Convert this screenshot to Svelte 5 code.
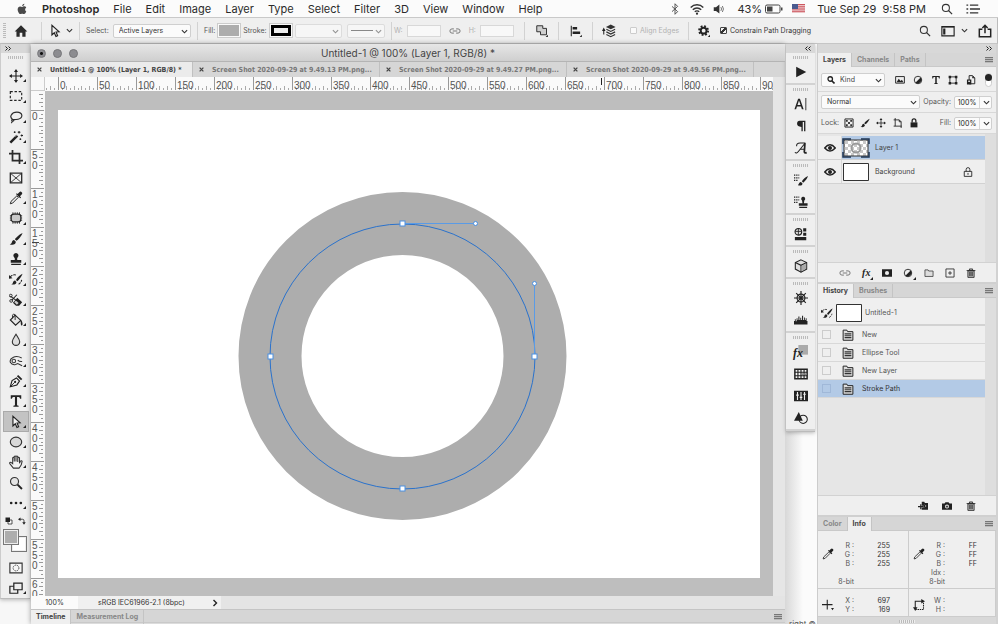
<script>
  const menus = ['File', 'Edit', 'Image', 'Layer', 'Type', 'Select', 'Filter', '3D', 'View', 'Window', 'Help'];
  const tools = [
    ['move', 'Move'], ['marquee', 'Marquee'], ['lasso', 'Lasso'], ['wand', 'Magic wand'], ['crop', 'Crop'],
    ['frame', 'Frame'], ['dropper', 'Eyedropper'], ['patch', 'Patch'], ['brush', 'Brush'], ['stamp', 'Clone stamp'],
    ['historybrush', 'History brush'], ['eraser', 'Eraser'], ['bucket', 'Paint bucket'], ['drop', 'Blur'],
    ['dodge', 'Dodge'], ['pen', 'Pen'], ['type', 'Type'], ['arrow', 'Path selection'], ['ellipse', 'Ellipse'],
    ['hand', 'Hand'], ['zoom', 'Zoom'], ['dots', 'More tools']
  ];
  const noFlyout = ['frame', 'zoom'];
  const docks = [
    ['play'], ['character', 'paragraph', 'glyphs'], ['brushlist', 'stamplist'], ['library'], ['cube'],
    ['wheel', 'histogram'], ['styles', 'swatches', 'adjust', 'shapes']
  ];
  const tabs = [
    'Screen Shot 2020-09-29 at 9.49.13 PM.png...',
    'Screen Shot 2020-09-29 at 9.49.27 PM.png...',
    'Screen Shot 2020-09-29 at 9.49.56 PM.png...'
  ];
  const history = ['New', 'Ellipse Tool', 'New Layer', 'Stroke Path'];
  let activeTool = $state('arrow');
  let activeStep = $state(3);

  const step = 39;
  const majorsX = Array.from({ length: 19 }, (_, i) => ({ i, label: i < 18 ? String(i * 50) : '90' }));
  const majorsY = Array.from({ length: 13 }, (_, i) => ({ i, digits: i < 12 ? String(i * 50).split('') : ['6', '0'] }));
  const minorX = Array.from({ length: 188 }, (_, i) => i - 3).filter((i) => i % 10 !== 0);
  const minorY = Array.from({ length: 130 }, (_, i) => i - 4).filter((i) => i % 10 !== 0);

  const S = 'fill="none" stroke="#2b2b2b"';
  const icons = {
    apple: '<path fill="#4a4a4a" d="M11.2 1c.1 1.600-1.300 3.100-2.900 3.100C8.100 2.500 9.600 1.100 11.200 1zM13.700 11.300c-.6 1.400-1.600 3.500-2.900 3.500-1 0-1.300-.6-2.500-.6s-1.600.6-2.500.6C4.300 14.800 2.200 11.500 2.200 8.700c0-2.700 1.700-4.100 3.300-4.100 1.100 0 2 .7 2.700.7s1.700-.8 3-.8c.9 0 1.900.5 2.500 1.400-2.200 1.300-1.900 4.300 0 5.400z"/>',
    bluetooth: '<path fill="none" stroke="#444" stroke-width="1.200" d="M4 4.500l7.500 7L8 15V1l3.500 3.500-7.500 7"/>',
    wifi: '<g fill="none" stroke="#333" stroke-width="1.700"><path d="M.8 6.200a10.200 10.200 0 0 1 14.400 0M3.200 8.800a6.800 6.800 0 0 1 9.600 0M5.500 11.200a3.500 3.500 0 0 1 5 0"/></g><circle cx="8" cy="13.300" r="1.300" fill="#333"/>',
    volume: '<path fill="#333" d="M1 5.500h3L8.500 2v12L4 10.500H1z"/><path fill="none" stroke="#666" stroke-width="1.200" d="M10.500 5.500q1.800 2.500 0 5M12.500 4q2.800 4 0 8"/>',
    search: '<circle cx="6.500" cy="6.500" r="4.700" fill="none" stroke="#333" stroke-width="1.400"/><path stroke="#333" stroke-width="1.600" d="M10 10l4.800 4.800"/>',
    searchbold: '<circle cx="6.500" cy="6" r="4.500" fill="none" stroke="#222" stroke-width="2.600"/><path stroke="#222" stroke-width="3.200" d="M9.500 9.500l5.500 5.500"/>',
    list: '<path stroke="#333" stroke-width="1.500" d="M4.500 3.500H14M4.500 8H16M4.500 12.500H14M.5 3.500H2.500M.5 8H2.500M.5 12.500H2.500"/>',
    home: '<path fill="#2b2b2b" d="M8 1.500L.8 8.500h2V14.500h3.700V10h3v4.500h3.700V8.500h2z"/>',
    arrow: '<path fill="#f4f4f4" stroke="#222" stroke-width="1.300" d="M4.500 1.500v11l2.700-2.500 1.900 4.300 1.900-.9L9.200 9.200l3.500-.3z"/>',
    link: '<g fill="none" stroke="#777" stroke-width="1.300"><path d="M6.500 10.800H4a2.800 2.800 0 0 1 0-5.600h2.500M9.500 5.200H12a2.800 2.800 0 0 1 0 5.600H9.500M5 8h6"/></g>',
    combine: '<path fill="#cfcfcf" stroke="#222" stroke-width="1.200" d="M1 1h8v3.500h5V13H6V9H1z"/><path fill="#222" d="M15.800 13v3H12.800z"/>',
    align: '<path fill="#222" d="M1 1h1.400v14H1zM3.500 2.500h6V6h-6zM3.500 8.500h10V12h-10zM15.800 13v3h-3z"/>',
    stack: '<path fill="#333" d="M10 .5l5.500 2.800L10 6 4.500 3.300z"/><path fill="none" stroke="#333" stroke-width="1.300" d="M5 6l5 2.500L15 6M5 9l5 2.500L15 9M5 12l5 2.500 5-2.500M2 12V6"/><path fill="#222" d="M2 4l2 4H0z"/>',
    gear: '<path fill="none" stroke="#222" stroke-width="2.600" stroke-dasharray="2.400 2.270" d="M13.450 7.500A5.950 5.950 0 1 1 1.550 7.500A5.950 5.950 0 1 1 13.450 7.500"/><circle cx="7.500" cy="7.500" r="3.900" fill="none" stroke="#222" stroke-width="2.600"/><path fill="#222" d="M16 13v3h-3z"/>',
    workspace: '<path fill="none" stroke="#222" stroke-width="1.300" d="M1 3h14v10.500H1z"/><path fill="#222" d="M2.500 5H5v7H2.500zM1 2.500h14v1.500H1z"/>',
    share: '<path fill="none" stroke="#222" stroke-width="1.700" d="M5 6H1.500v8.500h13V6H11M8 10.500V2M5 4.500L8 1.500l3 3"/>',
    move: '<path stroke="#222" stroke-width="1.300" d="M8 2v12M2 8h12"/><path fill="#222" d="M8 0l2.300 3.300H5.700zM8 16l2.300-3.300H5.700zM0 8l3.300-2.300v4.600zM16 8l-3.300-2.300v4.600z"/>',
    marquee: '<path fill="none" stroke="#222" stroke-width="1.300" stroke-dasharray="2.800 2" d="M1.500 3h13v10h-13z"/>',
    lasso: `<path ${S} stroke-width="1.300" d="M4.500 11C-.5 8 3 2.500 9 2.500c7 0 7.500 6.500 1.500 8-2.500.6-6 .5-6 .5zM4 10.500c-2 1-.5 2.500 1 2 1-.5.500-2-.5-1.500M3.500 12.500q.5 1.500-1 2.500"/>`,
    wand: '<path stroke="#222" stroke-width="2.800" d="M1.500 14.500l8-8"/><path stroke="#eee" stroke-width=".8" d="M7.500 7.500l1.500-1.500"/><path stroke="#222" stroke-width="1.200" d="M11.500 1v3M10 2.500h3M14.500 5v2.500M13.300 6.200H16M6.500 1.500v2M5.500 2.500h2M13 9.500v2M12 10.500h2"/>',
    crop: `<path ${S} stroke-width="2" d="M4 0v12h12M0 4h12v12"/>`,
    frame: `<path ${S} stroke-width="1.500" d="M1.500 2.500h13v11h-13z"/><path ${S} d="M1.500 2.500l13 11M14.500 2.500l-13 11"/>`,
    dropper: '<path fill="#eee" stroke="#222" stroke-width="1.100" d="M9 5.500l1.700 1.700-6.500 6.600-2.700.8.800-2.700z"/><path fill="#222" d="M8 3.500l4.800 4.800 1-1-1.300-1.300 2-2A1.900 1.900 0 0 0 11.800 1.300l-2 2L9 2.500z"/>',
    patch: '<path stroke="#222" stroke-width="1" d="M4.500 1.500v13M7 1.500v13M9.500 1.500v13M12 1.500v13M1 5.500h14M1 8h14M1 10.500h14"/><rect x="2.500" y="3.500" width="11" height="9" rx="3" fill="#c9c9c9" stroke="#222" stroke-width="1.300"/>',
    brush: '<path fill="#222" d="M15.500 1C13 2 8 6 6.700 8.300l1.800 1.800C11 8.500 14.500 4 15.500 1zM5.800 9.200c-2 0-2.200 1.800-2.700 3.100-.4 1-1.200 1.500-2.300 1.700 3 1.300 7.200.6 7-2.800z"/>',
    stamp: '<path fill="#222" d="M8 1a3 3 0 0 0-2 5.200c.8 1 .8 2 .5 3H2v3h12V9H9.500c-.3-1-.3-2 .5-3A3 3 0 0 0 8 1zM2.500 13.300h11v1.500h-11z"/>',
    historybrush: '<path fill="#222" d="M15.500 2C13 3 9.500 6.500 8 9l1.500 1.500C12 8.500 14.500 5 15.500 2zM7 9.800c-2 .2-2.200 1.600-2.600 2.700-.4.900-1.100 1.300-2.200 1.500 3 1 6.400.3 6.300-2.700z"/><path fill="none" stroke="#222" stroke-width="1.200" d="M1.500 5.500Q4 2.500 8 3.500M11 14q3-2 3.500-5" stroke-dasharray="3 1"/><path fill="#222" d="M0 3.500l4 3.500-4 .8z"/>',
    eraser: '<path fill="#222" d="M9.500 5.500l5.500 5-3.500 4.200L8 14.500 4.500 11z"/><path fill="#ccc" d="M8 8.500l3 3-2 2-3-3z"/><path fill="none" stroke="#222" stroke-width="1.200" d="M1.500 3.500L9 9M9 2L3 8.500"/><circle cx="2" cy="3" r="1.600" fill="none" stroke="#222"/><circle cx="2.500" cy="9" r="1.600" fill="none" stroke="#222"/>',
    bucket: '<path fill="#e6e6e6" stroke="#222" stroke-width="1.300" d="M7 2.500l6.500 6-6 5.500L1.500 8z"/><path fill="none" stroke="#222" d="M7 8V2q-2-2-3 .5V6"/><path fill="#222" d="M12.500 7l2.300 2.500q1.500 4-.3 5-1.500-.5-1-4.500z"/>',
    drop: '<path fill="#ddd" stroke="#333" stroke-width="1.300" d="M8 1.500c2 3.500 4.200 5.500 4.200 8.500a4.200 4.200 0 0 1-8.400 0C3.800 7 6 5 8 1.500z"/>',
    dodge: '<path fill="none" stroke="#333" stroke-width="1.200" d="M14.500 4.500Q9 1.500 4.500 4 .5 6 1.500 9.500q2 3.500 6 2.500l2.500-1 5 2.500M15 8.500q-3 .5-5-1.500"/><circle cx="5.500" cy="8" r="2" fill="none" stroke="#333" stroke-width="1.200"/>',
    pen: '<path fill="#eee" stroke="#222" stroke-width="1.300" d="M1.500 14.500L3.500 7.500l5-3L12 8l-3 4.500z"/><path fill="#222" d="M9 2.500l4.700 4.700 1.500-1.500L10.500 1z"/><path stroke="#222" d="M2 14l4.500-4.500"/><circle cx="7" cy="9" r="1.200" fill="#222"/>',
    type: '<path fill="#222" d="M2 1.500h12V5.500h-1.300Q12.500 3.300 11 3.300H9.200v9.200q0 .9 1.800.9v1.100H5v-1.100q1.800 0 1.800-.9V3.300H5Q3.500 3.300 3.300 5.500H2z"/>',
    ellipse: '<ellipse cx="8" cy="8" rx="6.500" ry="5.500" fill="#d8d8d8" stroke="#333" stroke-width="1.300"/>',
    hand: '<path fill="#f2f2f2" stroke="#333" stroke-width="1.200" d="M5 15L.8 9.800Q.6 8 2.300 8.500L4.200 10V3.300q.9-1.200 1.800 0V7.500 1.800q1-1.300 2 0V7.500 1.800q1-1.300 2 0V8 3.300q1-1.200 2 0V9.500l1-2.500q1.500-1.200 2 .3Q14.500 12 11.500 15z"/>',
    zoom: '<circle cx="6.300" cy="6.300" r="4.600" fill="#e4e4e4" stroke="#333" stroke-width="1.300"/><path stroke="#222" stroke-width="2.200" d="M9.800 9.800l5 5"/>',
    dots: '<g fill="#222"><circle cx="2.500" cy="8" r="1.500"/><circle cx="8" cy="8" r="1.500"/><circle cx="13.500" cy="8" r="1.500"/></g>',
    mask: '<path fill="#f6f6f6" stroke="#333" stroke-width="1.300" d="M1 2.500h14v11H1z"/><circle cx="8" cy="8" r="3.300" fill="none" stroke="#333" stroke-dasharray="1.500 .8"/>',
    screen: '<path fill="#eee" stroke="#222" stroke-width="1.400" d="M1 6h9v8H1z"/><path fill="#eee" stroke="#222" stroke-width="1.400" d="M5.500 2.500H15V10H5.500z"/>',
    reset: '<path fill="#f8f8f8" stroke="#222" stroke-width="1.500" d="M6 6h8v8H6z"/><path fill="#222" d="M1 1h9v9H1z"/>',
    swap: '<path fill="none" stroke="#222" stroke-width="1.600" d="M4 4.500h5q3 0 3 3V12"/><path fill="#222" d="M5 1v7L0 4.500zM8.500 10.500h7L12 15.500z"/>',
    play: '<path fill="#222" d="M2.500 2L14 8 2.500 14z"/>',
    character: '<path fill="#222" fill-rule="evenodd" d="M4.700 2h2.100l4.200 12H9L8 10.800H3.400L2.400 14H.5zM5.700 4L4 9.200h3.500z"/><path stroke="#444" stroke-width="1.200" d="M13.500 1v14"/>',
    paragraph: '<path fill="#222" d="M6.500 2H13v12h-1.500V3.500H10V14H8.500V9Q3.500 9 3.500 5.500T6.500 2z"/>',
    glyphs: '<path fill="none" stroke="#222" stroke-width="1.200" d="M3 6Q2.500 2.200 7 2.200H13M13 2L5 12Q3 14.800 1 13M6.500 9.500H12"/><path fill="none" stroke="#222" stroke-width="2" d="M12.500 2.500L11.800 12.500q.5 1.500 2.700.8"/>',
    brushlist: '<path fill="none" stroke="#222" stroke-width="1.500" stroke-dasharray="1.500 1" d="M0 2.500h6M0 5.500h6M0 8.500h5"/><path fill="#222" d="M16 3.500c-3 1-5.500 3.500-7 6l1.500 1.500c2.500-1.500 4.500-4.500 5.500-7.500zM8 10.300c-2 0-2 1.500-3.500 3.700 3.500 1 5.200 0 5.200-2z"/>',
    stamplist: '<path fill="none" stroke="#222" stroke-width="1.500" stroke-dasharray="1.500 1" d="M0 2.500h6M0 5.500h6M0 8.500h5"/><path fill="#222" d="M10.500 2a2.300 2.300 0 0 0-1.300 4.200l.5 3.300H5.500v2.800h10V9.500h-4.200l.5-3.300A2.300 2.300 0 0 0 10.500 2zM6 13.500h9v1.300H6z"/>',
    library: '<circle cx="5" cy="5.500" r="3.800" fill="#ddd" stroke="#222" stroke-width="1.300"/><path stroke="#222" d="M1.500 5h7M5 2v7"/><path fill="#222" d="M10.500 1.500H14V5h-3.500zM10.500 6.500H14V10h-3.500zM1 11.500h13v3.500H1z"/>',
    cube: '<path fill="#ddd" stroke="#222" stroke-width="1.200" d="M8 1l6.500 3v7.500L8 15l-6.500-3.500V4z"/><path fill="none" stroke="#222" stroke-width="1.200" d="M1.500 4L8 7.200 14.500 4M8 7.200V15"/><path fill="#aaa" d="M8.700 7.600l5.200-2.500v6L8.700 14z"/>',
    wheel: '<g fill="none" stroke="#222" stroke-width="1.300"><circle cx="8" cy="8" r="4.500"/><path d="M8 0v16M0 8h16M2.500 2.500l11 11M13.500 2.500l-11 11"/></g><circle cx="8" cy="8" r="1.800" fill="#222"/>',
    histogram: '<path fill="#222" d="M0 13V9h1V7h1v2.500h1V6h1v2h1V4h1.200v4h1V5.500h1V8h1V3h1.200v5h1V5h1v3h1V6h1v3h1v4z"/>',
    styles: '<path fill="#aaa" d="M5 0h11v11H5z"/>',
    swatches: '<path fill="#f4f4f4" stroke="#222" stroke-width="1.700" d="M1 2.500h14v11H1z"/><path fill="none" stroke="#222" stroke-width="1.300" d="M4.500 2.500v11M8 2.500v11M11.500 2.500v11M1 6h14M1 10h14"/><path fill="#888" d="M9 7h2v2H9zM12 7h2v2h-2z"/>',
    adjust: '<path fill="#222" d="M0 2h16v12H0z"/><path fill="none" stroke="#eee" stroke-width="1.300" d="M4 3.500v9M8 3.500v9M12 3.500v9M2.500 7h3M6.500 9.500h3M10.500 6h3"/>',
    shapes: '<circle cx="10.500" cy="9.500" r="4.700" fill="none" stroke="#222" stroke-width="1.200"/><path fill="#222" d="M5.500 1L10 11H0z"/>',
    image: '<path fill="none" stroke="#222" stroke-width="1.500" d="M1 2.500h14v10.500H1z"/><path fill="#222" d="M2.500 11.500L6 6l3 3.500 2-2 2.500 4z"/>',
    halfcircle: '<circle cx="8" cy="8" r="6" fill="none" stroke="#222" stroke-width="1.400"/><path fill="#222" d="M12.200 3.800a6 6 0 0 1-8.400 8.400z"/>',
    shape: '<path fill="none" stroke="#222" stroke-width="1.400" d="M3 3h10v10H3z"/><path fill="#222" d="M1 1h4v4H1zM11 1h4v4h-4zM1 11h4v4H1zM11 11h4v4h-4z"/>',
    smart: '<path fill="#eee" stroke="#222" stroke-width="1.500" d="M5 1h5.500L14 4.500V14H5z"/><path fill="#222" d="M1.500 7h7v8h-7zM10 1v4h4z"/><path fill="#eee" d="M3.500 9h3v2h-3z"/>',
    checker: '<path fill="#eee" stroke="#222" stroke-width="1.500" d="M1.500 1.500h13v13h-13z"/><path fill="#333" d="M3 3h3v3H3zM10 3h3v3h-3zM6.500 6.500h3v3h-3zM3 10h3v3H3zM10 10h3v3h-3z"/>',
    artboard: '<path fill="none" stroke="#222" stroke-width="1.400" d="M3.500 0v13M1 3h9l3 3v10M1 13h13M10 3v3h3"/>',
    lock: '<path fill="#222" d="M2.500 7h11v8h-11z"/><path fill="none" stroke="#222" stroke-width="2" d="M5 7V4.500a3 3 0 0 1 6 0V7"/>',
    lockline: '<path fill="#eee" stroke="#222" stroke-width="1.400" d="M2 7h12v8H2z"/><path fill="none" stroke="#222" stroke-width="1.400" d="M5 7V4a3 3 0 0 1 6 0v3M8 9.500v3"/>',
    eye: '<path fill="none" stroke="#222" stroke-width="2" d="M1 8q7-8.500 14 0-7 8-14 0z"/><circle cx="8" cy="8" r="2.700" fill="#222"/>',
    maskbtn: '<path fill="#222" d="M0 2h16v12H0z"/><circle cx="8" cy="8" r="3.300" fill="#eee"/>',
    folder: '<path fill="#ddd" stroke="#333" stroke-width="1.200" d="M1.500 3h5l1 1.800h7V13.500h-13z"/>',
    plus: '<path fill="none" stroke="#222" stroke-width="1.300" d="M1.500 1.500h13v13h-13zM8 5v6M5 8h6"/>',
    trash: '<path fill="#bbb" stroke="#222" stroke-width="1.300" d="M3 4.500h10V15H3zM1 4h14M5.500 3.500V1.500h5v2M6 6v7M8 6v7M10 6v7"/>',
    doc: '<path fill="#ddd" stroke="#222" stroke-width="1.300" d="M1.500 4V1.500h5L7.500 3.500h7V15h-13z"/><path stroke="#333" stroke-width="1.400" d="M3.500 6.500h9M3.500 9h9M3.500 11.500h9"/>',
    camera: '<path fill="#222" fill-rule="evenodd" d="M0 4h4l1.500-2h5L12 4h4v10H0zM8 5.500a3.300 3.300 0 1 0 0 6.600 3.300 3.300 0 0 0 0-6.600z"/><path stroke="#222" stroke-width="1.300" d="M8 7v4M6 9h4"/>',
    newdoc: '<path fill="#222" d="M6 1h4l1 2h5v11H6v-3.500h3V7.500H6z"/><path stroke="#222" stroke-width="2" d="M0 9h9M4.500 5v8"/><path stroke="#eee" d="M11 6l2 2-2 2"/>',
    cross: '<path stroke="#222" stroke-width="1.400" d="M7 1v13M0 7.500h14"/><path fill="#222" d="M12 12h4l-2 3z"/>',
    bounds: '<path fill="none" stroke="#222" stroke-width="1.400" d="M3 12V3h9"/><path fill="none" stroke="#222" stroke-width="1.400" stroke-dasharray="2 1" d="M14 5v9H4"/><path fill="#222" d="M11 0l5 3-5 3zM0 11h6l-3 5z"/>'
  };
</script>

{#snippet icon(name, cls = '')}
  <svg class="ic {cls}" viewBox="0 0 16 16" aria-hidden="true">{@html icons[name]}</svg>
{/snippet}

{#snippet chev()}
  <svg class="chev" viewBox="0 0 8 8" aria-hidden="true"><path fill="none" stroke="#333" stroke-width="1.300" d="M1 2.500l3 3 3-3" /></svg>
{/snippet}

{#snippet closer()}
  <svg class="closer" viewBox="0 0 8 8" aria-hidden="true"><path stroke="#444" stroke-width="2" d="M1 1l6 6M7 1l-6 6" /></svg>
{/snippet}

{#snippet arrows(dir)}
  <svg class="arrows" viewBox="0 0 12 10" aria-hidden="true"><path fill="none" stroke="#222" stroke-width="2" d={dir === 'r' ? 'M1 1l4 4-4 4M7 1l4 4-4 4' : 'M5 1L1 5l4 4M11 1L7 5l4 4'} /></svg>
{/snippet}

{#snippet panelMenu()}
  <button class="pmenu" aria-label="Panel menu"><i></i></button>
{/snippet}

<div class="app">
  <nav class="menubar">
    {@render icon('apple', 'm')}
    <button class="brand">Photoshop</button>
    {#each menus as m}<button>{m}</button>{/each}
    <div class="status">
      {@render icon('bluetooth', 'm')}
      {@render icon('wifi', 'l')}
      {@render icon('volume', 'm')}
      <span class="batt">43%
        <svg width="18" height="10" viewBox="0 0 18 10" aria-hidden="true"><rect x=".5" y="1" width="14.500" height="8" rx="1.500" fill="none" stroke="#444" /><path fill="#444" d="M2 2.500h5.500v5H2zM16 3.500h1.500v3H16z" /></svg>
      </span>
      <svg class="flag" width="13" height="9" viewBox="0 0 13 9" aria-hidden="true"><path fill="#f2dfe0" d="M0 0h13v9H0z" /><path stroke="#c8464f" stroke-width=".9" d="M0 .5h13M0 2.300h13M0 4.100h13M0 5.900h13M0 7.700h13" /><path fill="#4a5a8f" d="M0 0h6v5H0z" /></svg>
      <span class="clock">Tue Sep 29&nbsp; 9:58 PM</span>
      <span class="find">{@render icon('search', 'm')}</span>
      {@render icon('list', 'l')}
    </div>
  </nav>

  <div class="options">
    <div class="og first"><i class="vgrip"></i><button aria-label="Home">{@render icon('home', 'l')}</button></div>
    <div class="og w38"><button aria-label="Path selection tool">{@render icon('arrow', 'l')}</button>{@render chev()}</div>
    <div class="og w118">
      <label for="sel">Select:</label>
      <span class="sel grow"><select id="sel"><option>Active Layers</option></select>{@render chev()}</span>
    </div>
    <div class="og w194">
      <span>Fill:</span><button class="sw" aria-label="Fill"><i class="grey"></i></button>
      <span>Stroke:</span><button class="sw" aria-label="Stroke"><i class="ring"></i></button>
      <span class="sel dim w48"><select aria-label="Stroke width"><option></option></select>{@render chev()}</span>
      <span class="sel dim w38s"><select aria-label="Stroke style"><option></option></select><i class="ln"></i>{@render chev()}</span>
    </div>
    <div class="og w133 pale">
      <label for="w">W:</label><input id="w" type="text" />
      {@render icon('link', 'm')}
      <label for="h">H:</label><input id="h" type="text" />
    </div>
    <div class="og w34"><button aria-label="Path operations">{@render icon('combine', 'm')}</button></div>
    <div class="og w34"><button aria-label="Path alignment">{@render icon('align', 'm')}</button></div>
    <div class="og w96">
      <button aria-label="Path arrangement">{@render icon('stack', 'l')}</button>
      <label class="pale"><input type="checkbox" disabled />Align Edges</label>
    </div>
    <div class="og last">
      <button aria-label="Path options">{@render icon('gear', 'm')}</button>
      <label class="dark"><input type="checkbox" checked />Constrain Path Dragging</label>
    </div>
    <div class="right">
      <button aria-label="Search">{@render icon('search', 'm')}</button>
      <button aria-label="Workspace">{@render icon('workspace', 'l')}{@render chev()}</button>
      <button aria-label="Share">{@render icon('share', 'l')}</button>
    </div>
  </div>

  <div class="work">
    <aside class="toolbar">
      <div class="strip">{@render arrows('r')}</div>
      <i class="hgrip"></i>
      <div class="tools">
        {#each tools as [id, label]}
          <button class="tool" class:on={activeTool === id} aria-label={label} onclick={() => (activeTool = id)}>
            {@render icon(id, 't')}
            {#if !noFlyout.includes(id)}<i class="corner"></i>{/if}
          </button>
        {/each}
      </div>
      <div class="mini"><button aria-label="Default colours">{@render icon('reset', 's')}</button><button aria-label="Swap colours">{@render icon('swap', 's')}</button></div>
      <div class="colors"><button class="bg" aria-label="Background colour"></button><button class="fg" aria-label="Foreground colour"></button></div>
      <button class="tool plain" aria-label="Quick mask">{@render icon('mask', 't')}</button>
      <button class="tool plain" aria-label="Screen mode">{@render icon('screen', 't')}<i class="corner"></i></button>
    </aside>

    <main class="doc">
      <header class="title">
        <div class="lights"><i class="dot"></i><i></i><i></i></div>
        Untitled-1 @ 100% (Layer 1, RGB/8) *
      </header>
      <div class="tabs">
        <button class="tab cur">{@render closer()}<span>Untitled-1 @ 100% (Layer 1, RGB/8) *</span></button>
        {#each tabs as t}<button class="tab">{@render closer()}<span>{t}</span></button>{/each}
      </div>
      <div class="editor">
        <div class="origin"></div>
        <svg class="hr" aria-hidden="true">
          {#each minorX as i}<path stroke="#aaa" d="M{13.5 + Math.round(i * 3.9)} {i % 2 ? 11 : 9}V13" />{/each}
          {#each majorsX as { i, label }}
            <path stroke="#999" d="M{13.5 + i * step} 0V13" />
            <text x={15 + i * step} y="12">{label}</text>
          {/each}
          <path stroke="#222" d="M556.500 1V8" />
        </svg>
        <svg class="vr" aria-hidden="true">
          {#each minorY as i}<path stroke="#999" d="M{i % 2 ? 10 : 8} {19.5 + Math.round(i * 3.9)}H12" />{/each}
          {#each majorsY as { i, digits }}
            <path stroke="#999" d="M0 {19.5 + i * step}H13" />
            {#each digits as d, k}<text x="1" y={29 + i * step + k * 10}>{d}</text>{/each}
          {/each}
          <path stroke="#444" d="M1 151.500H8" />
        </svg>
        <svg class="canvas" role="img" aria-label="Grey ring with its path selected">
          <rect x="13" y="19" width="702" height="468" fill="#fff" />
          <circle cx="357.500" cy="265" r="132.500" fill="none" stroke="#adadad" stroke-width="63" />
          <g fill="none" stroke="#2a72cc">
            <circle cx="357.500" cy="265.500" r="132.500" />
            <path stroke="#5a9be6" d="M357 132.500H430M489.500 193V265" />
          </g>
          <g fill="#fff" stroke="#4a90e2" stroke-width="1">
            {#each [[357, 132], [489, 265], [357, 397], [225, 265]] as [x, y]}
              <rect x={x - 2} y={y - 2} width="5" height="5" />
            {/each}
            <circle cx="430.500" cy="132.500" r="2" /><circle cx="489.500" cy="192.500" r="2" />
          </g>
        </svg>
        <div class="vscroll"></div>
      </div>
      <div class="foot"><span class="pct">100%</span><span class="prof">sRGB IEC61966-2.1 (8bpc)</span><svg width="6" height="8" viewBox="0 0 6 8" aria-hidden="true"><path fill="none" stroke="#222" stroke-width="1.400" d="M1.500 1l3 3-3 3" /></svg></div>
      <div class="ptabs low"><button class="cur">Timeline</button><button>Measurement Log</button>{@render panelMenu()}</div>
    </main>

    <div class="dockcol">
      <div class="dock">
        <div class="strip end">{@render arrows('l')}</div>
        {#each docks as g}
          <div class="dg">
            <i class="hgrip"></i>
            {#each g as n}
              <button aria-label={n}>{@render icon(n, 't')}{#if n === 'styles'}<em class="fx over">fx</em>{/if}</button>
            {/each}
          </div>
        {/each}
      </div>
      <div class="behind">right ©</div>
    </div>

    <aside class="panels">
      <div class="strip end">{@render arrows('r')}</div>
      <section class="layers">
        <div class="ptabs"><button class="cur">Layers</button><button>Channels</button><button>Paths</button>{@render panelMenu()}</div>
        <div class="row filter">
          <span class="sel kind">{@render icon('searchbold', 's')}<select aria-label="Filter kind"><option>Kind</option></select>{@render chev()}</span>
          <div class="spread">
            {#each ['image', 'halfcircle', 'type', 'shape', 'smart'] as n}<button aria-label={n}>{@render icon(n, 'p')}</button>{/each}
          </div>
          <button class="toggle" aria-label="Toggle filter"><i></i></button>
        </div>
        <div class="row">
          <span class="sel grow"><select aria-label="Blend mode"><option>Normal</option></select>{@render chev()}</span>
          <label for="op">Opacity:</label><span class="num"><input id="op" type="text" value="100%" />{@render chev()}</span>
        </div>
        <div class="row">
          <span>Lock:</span>
          <div class="spread locks">
            {#each ['checker', 'brush', 'move', 'artboard', 'lock'] as n}<button aria-label={n}>{@render icon(n, 'p')}</button>{/each}
          </div>
          <label for="fi">Fill:</label><span class="num"><input id="fi" type="text" value="100%" />{@render chev()}</span>
        </div>
        <div class="list">
          <div class="items first-gap">
            <div class="layer on"><button aria-label="Visibility">{@render icon('eye', 'm')}</button>
              <svg class="thumb" viewBox="0 0 28 20" aria-hidden="true"><defs><pattern id="ck" width="6" height="6" patternUnits="userSpaceOnUse"><path fill="#fff" d="M0 0h6v6H0z" /><path fill="#c8c8c8" d="M0 0h3v3H0zM3 3h3v3H3z" /></pattern></defs><path fill="url(#ck)" stroke="#333" d="M2 2h24v16H2z" /><circle cx="14" cy="10" r="4.500" fill="none" stroke="#999" stroke-width="2" /><path fill="none" stroke="#1f3450" stroke-width="1.500" d="M1 6V1h8M19 1h8v5M27 14v5h-8M9 19H1v-5" /></svg>
              <span>Layer 1</span></div>
            <div class="layer"><button aria-label="Visibility">{@render icon('eye', 'm')}</button>
              <svg class="thumb" viewBox="0 0 28 20" aria-hidden="true"><path fill="#fff" stroke="#333" d="M1.500 1.500h25v17h-25z" /></svg>
              <span>Background</span>{@render icon('lockline', 'p')}</div>
          </div>
        </div>
        <div class="pfoot seven">
          <button aria-label="Link">{@render icon('link', 'm')}</button><button aria-label="Effects"><em class="fx">fx</em><i class="corner"></i></button>
          {#each ['maskbtn', 'halfcircle', 'folder', 'plus', 'trash'] as n}<button aria-label={n}>{@render icon(n, 'p')}{#if n === 'halfcircle'}<i class="corner"></i>{/if}</button>{/each}
        </div>
      </section>

      <section class="hist">
        <div class="ptabs"><button class="cur">History</button><button>Brushes</button>{@render panelMenu()}</div>
        <div class="list">
          <div class="items">
            <div class="snap">{@render icon('historybrush', 'm')}<svg class="thumb" viewBox="0 0 28 20" aria-hidden="true"><path fill="#fff" stroke="#333" d="M1.500 1.500h25v17h-25z" /></svg><span>Untitled-1</span></div>
            {#each history as h, i}
              <button class="step" class:on={i === activeStep} onclick={() => (activeStep = i)}><i></i>{@render icon('doc', 'm')}<span>{h}</span></button>
            {/each}
          </div>
        </div>
        <div class="pfoot three">
          {#each ['newdoc', 'camera', 'trash'] as n}<button aria-label={n}>{@render icon(n, 'p')}</button>{/each}
        </div>
      </section>

      <section class="info">
        <div class="ptabs"><button>Color</button><button class="cur">Info</button>{@render panelMenu()}</div>
        <div class="grid">
          <div class="cell top">{@render icon('dropper', 'm')}
            <dl><dt>R :</dt><dd>255</dd><dt>G :</dt><dd>255</dd><dt>B :</dt><dd>255</dd><dt></dt><dd></dd><dt>8-bit</dt><dd></dd></dl></div>
          <div class="cell top">{@render icon('dropper', 'm')}
            <dl><dt>R :</dt><dd>FF</dd><dt>G :</dt><dd>FF</dd><dt>B :</dt><dd>FF</dd><dt>Idx :</dt><dd></dd><dt>8-bit</dt><dd></dd></dl></div>
          <div class="cell">{@render icon('cross', 'm')}
            <dl><dt>X :</dt><dd>697</dd><dt>Y :</dt><dd>169</dd></dl></div>
          <div class="cell">{@render icon('bounds', 'm')}
            <dl><dt>W :</dt><dd></dd><dt>H :</dt><dd></dd></dl></div>
        </div>
        <div class="bottom"><i class="hgrip"></i></div>
      </section>
    </aside>
  </div>
</div>

<style>
  :global(body) { margin: 0; overflow: hidden; }
  * { box-sizing: border-box; }
  .app {
    height: 100vh; display: flex; flex-direction: column; background: #f7f7f7;
    font: 7px/10px Inter, "Liberation Sans", sans-serif; color: #555;
  }
  button, input, select { font: inherit; color: inherit; margin: 0; padding: 0; border: 0; background: none; border-radius: 0; }
  button { display: flex; align-items: center; justify-content: center; white-space: nowrap; flex: none; }
  svg { display: block; flex: none; }
  i { display: block; flex: none; }
  .ic { width: 12px; height: 12px; }
  .ic.s { width: 8px; height: 8px; }
  .ic.p { width: 10px; height: 10px; }
  .ic.l, .ic.t { width: 14px; height: 14px; }
  .chev { width: 7px; height: 7px; }
  .arrows { width: 6px; height: 5px; }

  .menubar { height: 18px; flex: none; display: flex; align-items: center; gap: 14px; padding: 0 18px 0 16px; background: #fbfbfb; border-bottom: 1px solid #c9c9c9; font-size: 11px; line-height: 14px; color: #2a2a2a; }
  .brand { font-weight: 600; }
  .status { margin-left: auto; display: flex; align-items: center; gap: 9px; }
  .batt { display: flex; align-items: center; gap: 3px; margin-left: 3px; }
  .flag { margin-right: 3px; }
  .clock { margin-right: 6px; white-space: nowrap; }
  .find { margin-right: 4px; }

  .options { height: 26px; flex: none; display: flex; align-items: center; background: #efefef; border-right: 1px solid #bbb; border-bottom: 1px solid #c6c6c6; }
  .og { height: 18px; display: flex; align-items: center; gap: 4px; flex: none; border-left: 1px solid #d2d2d2; padding: 0 6px; white-space: nowrap; }
  .first { width: 41px; border: 0; padding: 0 3px; gap: 8px; }
  .vgrip { width: 3px; height: 16px; background: repeating-linear-gradient(#bbb 0 1px, #eee 1px 2px); }
  .w38 { width: 38px; padding-left: 6px; }
  .w118 { width: 118px; }
  .w194 { width: 194px; gap: 2px; }
  .w133 { width: 133px; padding: 0 10px 0 2px; }
  .w133 .ic { margin: 0 4px; }
  .w133 input { flex: 1; min-width: 0; height: 12px; border: 1px solid #d8d8d8; background: #f8f8f8; }
  .w34 { width: 34px; justify-content: center; }
  .w96 { width: 96px; padding: 0 0 0 9px; gap: 14px; }
  .last { padding-left: 9px; gap: 10px; }
  .og label { display: flex; align-items: center; gap: 3px; }
  .og input[type='checkbox'] { appearance: none; width: 7px; height: 7px; border: 1px solid #ccc; border-radius: 1px; background: #fafafa; }
  .og input:checked { border-color: #444; background: linear-gradient(135deg, #f4f4f4 0 35%, #333 35% 65%, #f4f4f4 65%); }
  .pale { color: #b2b2b2; }
  .dark { color: #333; }
  .right { margin-left: auto; display: flex; gap: 10px; padding-right: 5px; }
  .right .chev { margin-left: 6px; }
  .sel { position: relative; display: flex; align-items: center; height: 14px; background: #fbfbfb; border: 1px solid #cfcfcf; border-radius: 2px; color: #333; min-width: 0; }
  .sel select { appearance: none; width: 100%; height: 12px; padding: 0 12px 0 5px; line-height: 10px; outline: 0; }
  .sel .chev { position: absolute; right: 2px; top: 3px; pointer-events: none; }
  .grow { flex: 1; }
  .dim { background: #f6f6f6; border-color: #dcdcdc; }
  .dim .chev { opacity: .5; }
  .w48 { width: 48px; }
  .w38s { width: 38px; margin-left: 3px; }
  .ln { position: absolute; left: 3px; top: 5px; width: 22px; height: 1px; background: #888; }
  .sw { width: 24px; height: 15px; border: 1px solid #ccc; background: #fafafa; }
  .sw i { width: 20px; height: 11px; }
  .grey { background: #adadad; }
  .ring { border: 3px solid #000; background: #eee; }

  .work { flex: 1; min-height: 0; display: flex; }
  .strip { height: 9px; flex: none; display: flex; align-items: center; padding: 0 4px; background: #d8d8d8; }
  .strip.end { justify-content: flex-end; }
  .hgrip { width: 16px; height: 3px; margin: 3px auto 2px; background: repeating-linear-gradient(90deg, #bbb 0 1px, #eee 1px 2px); }

  .toolbar { width: 30px; flex: none; margin-bottom: 25px; display: flex; flex-direction: column; background: #efefef; border-left: 1px solid #ccc; border-bottom: 1px solid #bbb; box-shadow: 0 1px 4px #0004; }
  .toolbar > .hgrip { margin-bottom: 7px; }
  .tools { flex: 1; min-height: 0; display: grid; grid-auto-rows: 1fr; }
  .tool { position: relative; width: 26px; margin: 0 auto; min-height: 0; border: 1px solid transparent; }
  .tool.on { background: #c3c3c3; border-color: #aaa; }
  .tool.plain { height: 20px; }
  .corner { position: absolute; right: 2px; bottom: 3px; border-left: 3px solid transparent; border-bottom: 3px solid #222; }
  .mini { display: flex; justify-content: center; gap: 5px; height: 15px; align-items: center; }
  .colors { position: relative; height: 30px; }
  .colors button { position: absolute; width: 16px; height: 16px; border: 1px solid #777; box-shadow: inset 0 0 0 1px #eee; }
  .fg { left: 2px; top: 1px; background: #adadad; }
  .bg { left: 10px; top: 8px; background: #fff; }

  .doc { flex: 1; min-width: 0; display: flex; flex-direction: column; margin-left: 1px; background: #dcdcdc; box-shadow: 0 0 5px #0006; }
  .title { position: relative; height: 18px; flex: none; display: flex; align-items: center; justify-content: center; background: linear-gradient(#e6e6e6, #cfcfcf); border-bottom: 1px solid #b4b4b4; font-size: 10px; line-height: 12px; color: #444; }
  .lights { position: absolute; left: 6px; top: 5px; display: flex; gap: 7px; }
  .lights i { width: 9px; height: 9px; border-radius: 50%; background: #8c8c90; border: 1px solid #77777a; }
  .lights .dot { background: radial-gradient(#111 0 1px, #8c8c90 2px); }
  .tabs { height: 15px; flex: none; display: flex; background: #d6d6d6; }
  .tab { gap: 8px; padding: 0 6px; justify-content: flex-start; border-right: 1px solid #c0c0c0; font-family: "DejaVu Sans Condensed", "DejaVu Sans", sans-serif; font-weight: 700; color: #777; min-width: 0; flex: 0 1 187px; }
  .tab.cur { flex-basis: 162px; background: #ebebeb; color: #444; }
  .closer { width: 5px; height: 5px; }
  .editor { flex: 1; min-height: 0; display: grid; grid-template: 14px 1fr / 14px 1fr 12px; }
  .origin { background: #f8f8f8; border-right: 1px solid #ccc; border-bottom: 1px solid #ccc; }
  .hr, .vr, .canvas { width: 100%; height: 100%; overflow: hidden; }
  .hr { background: #fafafa; }
  .vr { background: #fafafa; }
  .hr text, .vr text { font: 10px "Liberation Sans", sans-serif; fill: #555; }
  .canvas { background: #bebebe; }
  .vscroll { grid-column: 3; grid-row: 1 / 3; background: #e6e6e6; }
  .foot { height: 13px; flex: none; display: flex; align-items: center; color: #333; background: linear-gradient(90deg, #f0f0f0 190px, #e4e4e4 190px); }
  .pct { width: 47px; height: 13px; line-height: 13px; text-align: center; background: #fbfbfb; }
  .prof { width: 134px; padding-left: 20px; }
  .ptabs { height: 14px; flex: none; display: flex; background: #d6d6d6; border-bottom: 1px solid #c9c9c9; font-weight: 700; color: #888; }
  .ptabs button { height: 14px; padding: 0 5px; border-right: 1px solid #c4c4c4; }
  .ptabs .cur { background: #efefef; color: #444; }
  .ptabs .pmenu { margin-left: auto; border: 0; padding: 0 3px; }
  .pmenu i { width: 8px; height: 6px; background: repeating-linear-gradient(#777 0 1px, #bbb 1px 2px); }
  .low { margin-bottom: 1px; border-top: 1px solid #c4c4c4; }

  .dockcol { width: 32px; flex: none; display: flex; flex-direction: column; background: linear-gradient(90deg, #d8d8d8, #fbfbfb 18px); }
  .dock { margin: 0 2px 0 1px; background: #efefef; border-bottom: 1px solid #bbb; box-shadow: 0 1px 4px #0004; }
  .dg { padding-top: 3px; border-bottom: 2px solid #d2d2d2; }
  .dg button { position: relative; width: 100%; height: 22px; }
  .dg .hgrip { margin: 0 auto 2px; }
  .behind { margin-top: auto; height: 6px; padding-left: 4px; overflow: hidden; font-size: 8px; line-height: 12px; white-space: nowrap; }
  .fx { font: italic 700 10px/10px "Liberation Serif", serif; color: #222; }
  .over { position: absolute; left: 7px; top: 7px; font-size: 12px; }

  .panels { width: 181px; flex: none; display: flex; flex-direction: column; background: #efefef; border-right: 2px solid #d2d2d2; border-left: 1px solid #ccc; }
  section { display: flex; flex-direction: column; min-height: 0; }
  .layers { flex: 229 1 0; border-bottom: 2px solid #d0d0d0; }
  .hist { flex: 231 1 0; border-bottom: 2px solid #d0d0d0; }
  .row { height: 21px; flex: none; display: flex; align-items: center; gap: 3px; padding: 0 4px 0 3px; border-bottom: 1px solid #d8d8d8; }
  .filter { height: 25px; padding-top: 2px; }
  .kind { width: 64px; padding-left: 5px; color: #444; }
  .row .kind .ic { flex: none; }
  .spread { flex: 1; display: flex; justify-content: space-between; padding: 0 6px 0 7px; }
  .locks { padding: 0 18px 0 2px; }
  .toggle { width: 7px; height: 14px; border-radius: 4px; background: #fff; border: 1px solid #ccc; align-items: flex-start; }
  .toggle i { width: 7px; height: 7px; border-radius: 50%; background: #222; }
  .num { width: 38px; height: 13px; display: flex; align-items: center; gap: 3px; border: 1px solid #cfcfcf; border-radius: 2px; background: #fbfbfb; color: #222; }
  .num input { width: 25px; height: 11px; text-align: center; border-right: 1px solid #d8d8d8; }
  .list { flex: 1; min-height: 0; display: flex; background: linear-gradient(90deg, #e6e6e6 calc(100% - 11px), #dedede calc(100% - 11px)); }
  .items { width: calc(100% - 11px); }
  .first-gap { padding-top: 2px; }
  .layer { height: 24px; display: flex; align-items: center; background: #efefef; border-bottom: 1px solid #d2d2d2; color: #444; padding-right: 12px; }
  .layer button { width: 24px; height: 23px; background: #efefef; border-right: 1px solid #d8d8d8; }
  .layer span { flex: 1; margin-left: 5px; }
  .thumb { width: 28px; height: 20px; }
  .on.layer, .on.step { background: #b3cae6; }
  .pfoot { height: 20px; flex: none; display: flex; align-items: center; justify-content: space-between; border-top: 1px solid #d2d2d2; }
  .pfoot button { position: relative; }
  .pfoot .corner { right: -3px; bottom: -2px; }
  .seven { padding: 0 20px 0 21px; }
  .three { padding: 0 20px 0 100px; }
  .snap { height: 28px; display: flex; align-items: center; gap: 2px; padding: 3px 0 0 3px; background: #efefef; border-bottom: 2px solid #d2d2d2; }
  .step { width: 100%; height: 18px; justify-content: flex-start; background: #efefef; border-bottom: 1px solid #d8d8d8; gap: 8px; padding-left: 4px; }
  .step i { width: 9px; height: 9px; margin-right: 3px; border: 1px solid #ccc; }
  .step.on { color: #333; }
  .step.on i { border-color: #a0b8d8; }

  .info { flex: none; }
  .grid { display: grid; grid-template-columns: 91px 1fr; }
  .cell { display: flex; align-items: center; padding: 7px 18px 2px 4px; border-right: 1px solid #ccc; border-bottom: 1px solid #ccc; }
  .cell.top { align-items: flex-start; padding-top: 10px; }
  .cell.top .ic { margin-top: 7px; }
  dl { flex: 1; margin: 0; display: grid; grid-template-columns: 20px 1fr; grid-auto-rows: 9px; line-height: 9px; text-align: right; white-space: nowrap; }
  dd { margin: 0; color: #333; }
  .bottom { height: 7px; background: #d8d8d8; overflow: hidden; }
</style>
